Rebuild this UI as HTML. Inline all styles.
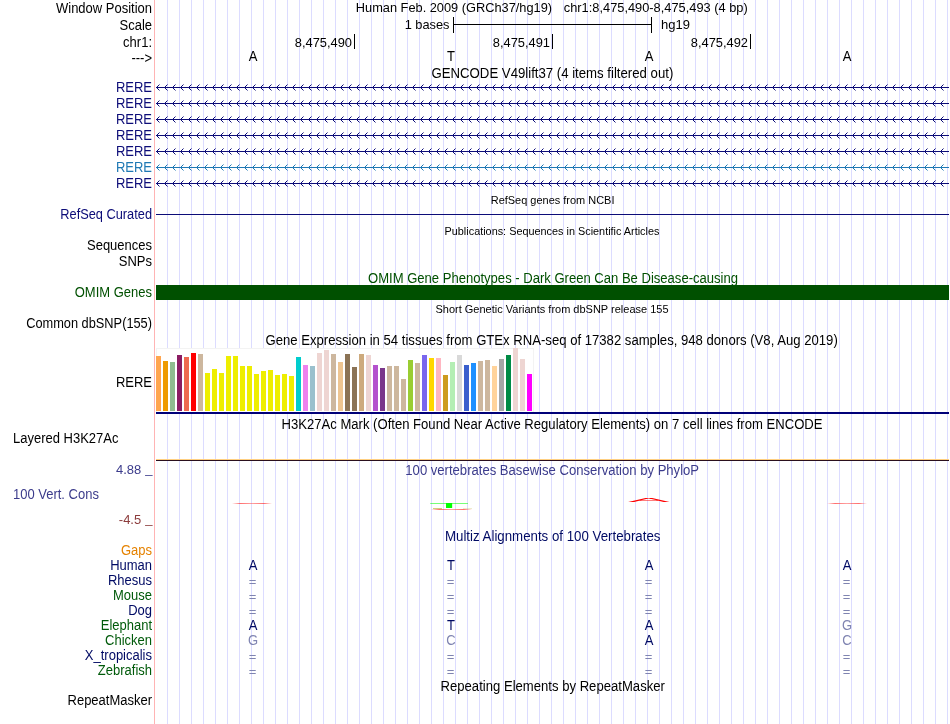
<!DOCTYPE html>
<html><head><meta charset="utf-8"><title>UCSC Genome Browser</title>
<style>
html,body{margin:0;padding:0;background:#fff;}
body{width:950px;height:724px;overflow:hidden;}
svg{display:block;will-change:transform;font-family:"Liberation Sans", sans-serif;font-size:13px;}
.r{text-anchor:end} .c{text-anchor:middle}
.s{font-size:10.8px}
</style></head><body>
<svg width="950" height="724" viewBox="0 0 950 724">
<defs>
<pattern id="chevN" x="156" y="0" width="8" height="7" patternUnits="userSpaceOnUse">
<path d="M3.5,0.5 L0.5,3.5 L3.5,6.5" fill="none" stroke="#0c0c78" stroke-width="1"/>
</pattern>
<pattern id="chevT" x="156" y="0" width="8" height="7" patternUnits="userSpaceOnUse">
<path d="M3.5,0.5 L0.5,3.5 L3.5,6.5" fill="none" stroke="#1e78b4" stroke-width="1"/>
</pattern>
<linearGradient id="fr" x1="0" x2="1" y1="0" y2="0">
<stop offset="0" stop-color="#ff3030" stop-opacity="0"/><stop offset="0.2" stop-color="#ff3030" stop-opacity="0.7"/>
<stop offset="0.5" stop-color="#ff3030" stop-opacity="0.45"/>
<stop offset="0.8" stop-color="#ff3030" stop-opacity="0.7"/><stop offset="1" stop-color="#ff3030" stop-opacity="0"/>
</linearGradient>
</defs>


<g fill="#dcdcff" shape-rendering="crispEdges">
<rect x="167" y="0" width="1" height="724"/>
<rect x="179" y="0" width="1" height="724"/>
<rect x="191" y="0" width="1" height="724"/>
<rect x="203" y="0" width="1" height="724"/>
<rect x="215" y="0" width="1" height="724"/>
<rect x="227" y="0" width="1" height="724"/>
<rect x="239" y="0" width="1" height="724"/>
<rect x="251" y="0" width="1" height="724"/>
<rect x="263" y="0" width="1" height="724"/>
<rect x="275" y="0" width="1" height="724"/>
<rect x="287" y="0" width="1" height="724"/>
<rect x="299" y="0" width="1" height="724"/>
<rect x="311" y="0" width="1" height="724"/>
<rect x="323" y="0" width="1" height="724"/>
<rect x="335" y="0" width="1" height="724"/>
<rect x="347" y="0" width="1" height="724"/>
<rect x="359" y="0" width="1" height="724"/>
<rect x="371" y="0" width="1" height="724"/>
<rect x="383" y="0" width="1" height="724"/>
<rect x="395" y="0" width="1" height="724"/>
<rect x="407" y="0" width="1" height="724"/>
<rect x="419" y="0" width="1" height="724"/>
<rect x="431" y="0" width="1" height="724"/>
<rect x="443" y="0" width="1" height="724"/>
<rect x="455" y="0" width="1" height="724"/>
<rect x="467" y="0" width="1" height="724"/>
<rect x="479" y="0" width="1" height="724"/>
<rect x="491" y="0" width="1" height="724"/>
<rect x="503" y="0" width="1" height="724"/>
<rect x="515" y="0" width="1" height="724"/>
<rect x="527" y="0" width="1" height="724"/>
<rect x="539" y="0" width="1" height="724"/>
<rect x="551" y="0" width="1" height="724"/>
<rect x="563" y="0" width="1" height="724"/>
<rect x="575" y="0" width="1" height="724"/>
<rect x="587" y="0" width="1" height="724"/>
<rect x="599" y="0" width="1" height="724"/>
<rect x="611" y="0" width="1" height="724"/>
<rect x="623" y="0" width="1" height="724"/>
<rect x="635" y="0" width="1" height="724"/>
<rect x="647" y="0" width="1" height="724"/>
<rect x="659" y="0" width="1" height="724"/>
<rect x="671" y="0" width="1" height="724"/>
<rect x="683" y="0" width="1" height="724"/>
<rect x="695" y="0" width="1" height="724"/>
<rect x="707" y="0" width="1" height="724"/>
<rect x="719" y="0" width="1" height="724"/>
<rect x="731" y="0" width="1" height="724"/>
<rect x="743" y="0" width="1" height="724"/>
<rect x="755" y="0" width="1" height="724"/>
<rect x="767" y="0" width="1" height="724"/>
<rect x="779" y="0" width="1" height="724"/>
<rect x="791" y="0" width="1" height="724"/>
<rect x="803" y="0" width="1" height="724"/>
<rect x="815" y="0" width="1" height="724"/>
<rect x="827" y="0" width="1" height="724"/>
<rect x="839" y="0" width="1" height="724"/>
<rect x="851" y="0" width="1" height="724"/>
<rect x="863" y="0" width="1" height="724"/>
<rect x="875" y="0" width="1" height="724"/>
<rect x="887" y="0" width="1" height="724"/>
<rect x="899" y="0" width="1" height="724"/>
<rect x="911" y="0" width="1" height="724"/>
<rect x="923" y="0" width="1" height="724"/>
<rect x="935" y="0" width="1" height="724"/>
<rect x="947" y="0" width="1" height="724"/>
</g>
<rect x="154" y="0" width="1" height="724" fill="#ffb4b4" shape-rendering="crispEdges"/>
<text transform="translate(152,12.5) scale(1.0,1.08)" class="r" fill="#000">Window Position</text>
<text transform="translate(152,29.5) scale(1.0,1.08)" class="r" fill="#000">Scale</text>
<text transform="translate(152,46.5) scale(1.0,1.08)" class="r" fill="#000">chr1:</text>
<text transform="translate(152,63) scale(1.0,1.08)" class="r" fill="#000">---&gt;</text>
<text transform="translate(355.8,12.2) scale(0.985,1.0)" class="" fill="#000">Human Feb. 2009 (GRCh37/hg19)</text>
<text transform="translate(563.8,12.2) scale(0.987,1.0)" class="" fill="#000">chr1:8,475,490-8,475,493 (4 bp)</text>
<text transform="translate(449.5,29) scale(0.985,1.0)" class="r" fill="#000">1 bases</text>
<g fill="#000" shape-rendering="crispEdges"><rect x="453" y="24" width="199" height="1"/><rect x="453" y="17" width="1" height="16"/><rect x="651" y="17" width="1" height="16"/></g>
<text transform="translate(661,29) scale(1.0,1.0)" class="" fill="#000">hg19</text>
<text transform="translate(352,47) scale(0.99,1.0)" class="r" fill="#000">8,475,490</text>
<rect x="354" y="34" width="1" height="15" fill="#000" shape-rendering="crispEdges"/>
<text transform="translate(550,47) scale(0.99,1.0)" class="r" fill="#000">8,475,491</text>
<rect x="552" y="34" width="1" height="15" fill="#000" shape-rendering="crispEdges"/>
<text transform="translate(748,47) scale(0.99,1.0)" class="r" fill="#000">8,475,492</text>
<rect x="750" y="34" width="1" height="15" fill="#000" shape-rendering="crispEdges"/>
<text transform="translate(253,61) scale(1.0,1.1)" class="c" fill="#000">A</text>
<text transform="translate(451,61) scale(1.0,1.1)" class="c" fill="#000">T</text>
<text transform="translate(649,61) scale(1.0,1.1)" class="c" fill="#000">A</text>
<text transform="translate(847,61) scale(1.0,1.1)" class="c" fill="#000">A</text>
<text transform="translate(552.4,77.5) scale(1.015,1.08)" class="c" fill="#000">GENCODE V49lift37 (4 items filtered out)</text>
<text transform="translate(152,91.5) scale(1.0,1.1)" class="r" fill="#0c0c78">RERE</text>
<g color="#0c0c78" shape-rendering="crispEdges"><rect x="156" y="87" width="793" height="1" fill="#0c0c78"/></g>
<g color="#0c0c78" transform="translate(0,84)"><rect x="156" y="0" width="791" height="7" fill="url(#chevN)"/></g>
<text transform="translate(152,107.5) scale(1.0,1.1)" class="r" fill="#0c0c78">RERE</text>
<g color="#0c0c78" shape-rendering="crispEdges"><rect x="156" y="103" width="793" height="1" fill="#0c0c78"/></g>
<g color="#0c0c78" transform="translate(0,100)"><rect x="156" y="0" width="791" height="7" fill="url(#chevN)"/></g>
<text transform="translate(152,123.5) scale(1.0,1.1)" class="r" fill="#0c0c78">RERE</text>
<g color="#0c0c78" shape-rendering="crispEdges"><rect x="156" y="119" width="793" height="1" fill="#0c0c78"/></g>
<g color="#0c0c78" transform="translate(0,116)"><rect x="156" y="0" width="791" height="7" fill="url(#chevN)"/></g>
<text transform="translate(152,139.5) scale(1.0,1.1)" class="r" fill="#0c0c78">RERE</text>
<g color="#0c0c78" shape-rendering="crispEdges"><rect x="156" y="135" width="793" height="1" fill="#0c0c78"/></g>
<g color="#0c0c78" transform="translate(0,132)"><rect x="156" y="0" width="791" height="7" fill="url(#chevN)"/></g>
<text transform="translate(152,155.5) scale(1.0,1.1)" class="r" fill="#0c0c78">RERE</text>
<g color="#0c0c78" shape-rendering="crispEdges"><rect x="156" y="151" width="793" height="1" fill="#0c0c78"/></g>
<g color="#0c0c78" transform="translate(0,148)"><rect x="156" y="0" width="791" height="7" fill="url(#chevN)"/></g>
<text transform="translate(152,171.5) scale(1.0,1.1)" class="r" fill="#1e78b4">RERE</text>
<g color="#1e78b4" shape-rendering="crispEdges"><rect x="156" y="167" width="793" height="1" fill="#1e78b4"/></g>
<g color="#1e78b4" transform="translate(0,164)"><rect x="156" y="0" width="791" height="7" fill="url(#chevT)"/></g>
<text transform="translate(152,187.5) scale(1.0,1.1)" class="r" fill="#0c0c78">RERE</text>
<g color="#0c0c78" shape-rendering="crispEdges"><rect x="156" y="183" width="793" height="1" fill="#0c0c78"/></g>
<g color="#0c0c78" transform="translate(0,180)"><rect x="156" y="0" width="791" height="7" fill="url(#chevN)"/></g>
<text transform="translate(552.6,204) scale(1.017,1.08)" class="c s" fill="#000">RefSeq genes from NCBI</text>
<text transform="translate(152,218.5) scale(0.985,1.08)" class="r" fill="#0c0c78">RefSeq Curated</text>
<rect x="156" y="214" width="793" height="1" fill="#0c0c78" shape-rendering="crispEdges"/>
<text transform="translate(552,235) scale(1.006,1.08)" class="c s" fill="#000">Publications: Sequences in Scientific Articles</text>
<text transform="translate(152,249.5) scale(1.0,1.08)" class="r" fill="#000">Sequences</text>
<text transform="translate(152,265.5) scale(1.0,1.1)" class="r" fill="#000">SNPs</text>
<text transform="translate(553,282.5) scale(1.005,1.08)" class="c" fill="#005000">OMIM Gene Phenotypes - Dark Green Can Be Disease-causing</text>
<text transform="translate(152,296.5) scale(1.0,1.1)" class="r" fill="#005000">OMIM Genes</text>
<rect x="156" y="285" width="793" height="15" fill="#005000" shape-rendering="crispEdges"/>
<text transform="translate(552,313) scale(1.019,1.08)" class="c s" fill="#000">Short Genetic Variants from dbSNP release 155</text>
<text transform="translate(152,327.5) scale(0.985,1.08)" class="r" fill="#000">Common dbSNP(155)</text>
<text transform="translate(551.6,344.5) scale(1.01,1.08)" class="c" fill="#000">Gene Expression in 54 tissues from GTEx RNA-seq of 17382 samples, 948 donors (V8, Aug 2019)</text>
<rect x="156" y="348" width="378" height="64" fill="#f3f3f3" shape-rendering="crispEdges"/><rect x="157" y="349" width="376" height="63" fill="#fff" shape-rendering="crispEdges"/>
<g shape-rendering="crispEdges">
<rect x="156" y="356" width="5" height="55" fill="#FFA54F"/>
<rect x="163" y="361" width="5" height="50" fill="#EE9A00"/>
<rect x="170" y="362" width="5" height="49" fill="#8FBC8F"/>
<rect x="177" y="355" width="5" height="56" fill="#8B1C62"/>
<rect x="184" y="357" width="5" height="54" fill="#EE6A50"/>
<rect x="191" y="353" width="5" height="58" fill="#FF0000"/>
<rect x="198" y="354" width="5" height="57" fill="#CDB79E"/>
<rect x="205" y="373" width="5" height="38" fill="#EEEE00"/>
<rect x="212" y="369" width="5" height="42" fill="#EEEE00"/>
<rect x="219" y="373" width="5" height="38" fill="#EEEE00"/>
<rect x="226" y="356" width="5" height="55" fill="#EEEE00"/>
<rect x="233" y="356" width="5" height="55" fill="#EEEE00"/>
<rect x="240" y="366" width="5" height="45" fill="#EEEE00"/>
<rect x="247" y="366" width="5" height="45" fill="#EEEE00"/>
<rect x="254" y="374" width="5" height="37" fill="#EEEE00"/>
<rect x="261" y="371" width="5" height="40" fill="#EEEE00"/>
<rect x="268" y="370" width="5" height="41" fill="#EEEE00"/>
<rect x="275" y="375" width="5" height="36" fill="#EEEE00"/>
<rect x="282" y="374" width="5" height="37" fill="#EEEE00"/>
<rect x="289" y="376" width="5" height="35" fill="#EEEE00"/>
<rect x="296" y="357" width="5" height="54" fill="#00CDCD"/>
<rect x="303" y="365" width="5" height="46" fill="#EE82EE"/>
<rect x="310" y="366" width="5" height="45" fill="#9AC0CD"/>
<rect x="317" y="353" width="5" height="58" fill="#EED5D2"/>
<rect x="324" y="350" width="5" height="61" fill="#EED5D2"/>
<rect x="331" y="354" width="5" height="57" fill="#CDB79E"/>
<rect x="338" y="362" width="5" height="49" fill="#EEC591"/>
<rect x="345" y="354" width="5" height="57" fill="#8B7355"/>
<rect x="352" y="367" width="5" height="44" fill="#8B7355"/>
<rect x="359" y="354" width="5" height="57" fill="#CDAA7D"/>
<rect x="366" y="355" width="5" height="56" fill="#EED5D2"/>
<rect x="373" y="365" width="5" height="46" fill="#B452CD"/>
<rect x="380" y="368" width="5" height="43" fill="#7A378B"/>
<rect x="387" y="366" width="5" height="45" fill="#CDB79E"/>
<rect x="394" y="366" width="5" height="45" fill="#CDB79E"/>
<rect x="401" y="379" width="5" height="32" fill="#CDB79E"/>
<rect x="408" y="360" width="5" height="51" fill="#9ACD32"/>
<rect x="415" y="363" width="5" height="48" fill="#CDB79E"/>
<rect x="422" y="355" width="5" height="56" fill="#7A67EE"/>
<rect x="429" y="358" width="5" height="53" fill="#FFD700"/>
<rect x="436" y="358" width="5" height="53" fill="#FFB6C1"/>
<rect x="443" y="375" width="5" height="36" fill="#CD9B1D"/>
<rect x="450" y="362" width="5" height="49" fill="#B4EEB4"/>
<rect x="457" y="355" width="5" height="56" fill="#D9D9D9"/>
<rect x="464" y="365" width="5" height="46" fill="#3A5FCD"/>
<rect x="471" y="363" width="5" height="48" fill="#1E90FF"/>
<rect x="478" y="361" width="5" height="50" fill="#CDB79E"/>
<rect x="485" y="360" width="5" height="51" fill="#CDB79E"/>
<rect x="492" y="366" width="5" height="45" fill="#FFD39B"/>
<rect x="499" y="359" width="5" height="52" fill="#A6A6A6"/>
<rect x="506" y="355" width="5" height="56" fill="#008B45"/>
<rect x="513" y="348" width="5" height="63" fill="#EED5D2"/>
<rect x="520" y="359" width="5" height="52" fill="#EED5D2"/>
<rect x="527" y="374" width="5" height="37" fill="#FF00FF"/>
<rect x="156" y="412" width="793" height="2" fill="#000078"/>
</g>
<text transform="translate(152,386.5) scale(1.0,1.1)" class="r" fill="#000">RERE</text>
<text transform="translate(552,428.5) scale(1.0075,1.08)" class="c" fill="#000">H3K27Ac Mark (Often Found Near Active Regulatory Elements) on 7 cell lines from ENCODE</text>
<text transform="translate(13,442.5) scale(1.0,1.08)" class="" fill="#000">Layered H3K27Ac</text>
<g shape-rendering="crispEdges"><rect x="156" y="459" width="793" height="1" fill="#ffcf80"/><rect x="156" y="460" width="793" height="1" fill="#2a0f1e"/></g>
<text transform="translate(141.2,473.5) scale(1.0,0.98)" class="r" fill="#3c3c8c">4.88</text>
<text transform="translate(152.5,473.1) scale(1.0,1.0)" class="r" fill="#3c3c8c">_</text>
<text transform="translate(552.2,474.5) scale(1.007,1.08)" class="c" fill="#3c3c8c">100 vertebrates Basewise Conservation by PhyloP</text>
<text transform="translate(13,498.5) scale(1.0,1.08)" class="" fill="#3c3c8c">100 Vert. Cons</text>
<text transform="translate(141.2,523.5) scale(1.0,0.98)" class="r" fill="#8c3c3c">-4.5</text>
<text transform="translate(152.5,523.1) scale(1.0,1.0)" class="r" fill="#8c3c3c">_</text>
<rect x="232" y="503" width="40" height="1" fill="url(#fr)"/>
<rect x="827" y="503" width="40" height="1" fill="url(#fr)"/>
<rect x="431" y="509" width="41" height="1" fill="url(#fr)"/>
<rect x="433" y="508" width="9" height="1" fill="#a0a000" opacity="0.5"/><rect x="463" y="508" width="9" height="1" fill="#a0a000" opacity="0.2"/>
<text fill="#00ff00" style="font-size:10px" transform="translate(428.7,508) scale(6.67,0.7)">T</text>
<text x="0" y="0" fill="#ff0000" style="font-size:10px" transform="translate(628,502) scale(6.25,0.6)">A</text>
<text transform="translate(552.7,540.5) scale(1.022,1.08)" class="c" fill="#000a64">Multiz Alignments of 100 Vertebrates</text>
<text transform="translate(152,554.5) scale(1.0,1.08)" class="r" fill="#e58200">Gaps</text>
<text transform="translate(152,569.5) scale(1.0,1.08)" class="r" fill="#000a64">Human</text>
<text transform="translate(253,569.5) scale(1.0,1.1)" class="c" fill="#000a64">A</text>
<text transform="translate(451,569.5) scale(1.0,1.1)" class="c" fill="#000a64">T</text>
<text transform="translate(649,569.5) scale(1.0,1.1)" class="c" fill="#000a64">A</text>
<text transform="translate(847,569.5) scale(1.0,1.1)" class="c" fill="#000a64">A</text>
<text transform="translate(152,584.5) scale(1.0,1.08)" class="r" fill="#000a64">Rhesus</text>
<text transform="translate(252.5,586.4) scale(1.0,1.0)" class="c" fill="#7f84b1">=</text>
<text transform="translate(450.5,586.4) scale(1.0,1.0)" class="c" fill="#7f84b1">=</text>
<text transform="translate(648.5,586.4) scale(1.0,1.0)" class="c" fill="#7f84b1">=</text>
<text transform="translate(846.5,586.4) scale(1.0,1.0)" class="c" fill="#7f84b1">=</text>
<text transform="translate(152,599.5) scale(1.0,1.08)" class="r" fill="#005a0a">Mouse</text>
<text transform="translate(252.5,601.4) scale(1.0,1.0)" class="c" fill="#7f84b1">=</text>
<text transform="translate(450.5,601.4) scale(1.0,1.0)" class="c" fill="#7f84b1">=</text>
<text transform="translate(648.5,601.4) scale(1.0,1.0)" class="c" fill="#7f84b1">=</text>
<text transform="translate(846.5,601.4) scale(1.0,1.0)" class="c" fill="#7f84b1">=</text>
<text transform="translate(152,614.5) scale(1.0,1.08)" class="r" fill="#000a64">Dog</text>
<text transform="translate(252.5,616.4) scale(1.0,1.0)" class="c" fill="#7f84b1">=</text>
<text transform="translate(450.5,616.4) scale(1.0,1.0)" class="c" fill="#7f84b1">=</text>
<text transform="translate(648.5,616.4) scale(1.0,1.0)" class="c" fill="#7f84b1">=</text>
<text transform="translate(846.5,616.4) scale(1.0,1.0)" class="c" fill="#7f84b1">=</text>
<text transform="translate(152,629.5) scale(1.0,1.08)" class="r" fill="#005a0a">Elephant</text>
<text transform="translate(253,629.5) scale(1.0,1.1)" class="c" fill="#000a64">A</text>
<text transform="translate(451,629.5) scale(1.0,1.1)" class="c" fill="#000a64">T</text>
<text transform="translate(649,629.5) scale(1.0,1.1)" class="c" fill="#000a64">A</text>
<text transform="translate(847,629.5) scale(1.0,1.1)" class="c" fill="#7f84b1">G</text>
<text transform="translate(152,644.5) scale(1.0,1.08)" class="r" fill="#005a0a">Chicken</text>
<text transform="translate(253,644.5) scale(1.0,1.1)" class="c" fill="#7f84b1">G</text>
<text transform="translate(451,644.5) scale(1.0,1.1)" class="c" fill="#7f84b1">C</text>
<text transform="translate(649,644.5) scale(1.0,1.1)" class="c" fill="#000a64">A</text>
<text transform="translate(847,644.5) scale(1.0,1.1)" class="c" fill="#7f84b1">C</text>
<text transform="translate(152,659.5) scale(1.0,1.08)" class="r" fill="#000a64">X_tropicalis</text>
<text transform="translate(252.5,661.4) scale(1.0,1.0)" class="c" fill="#7f84b1">=</text>
<text transform="translate(450.5,661.4) scale(1.0,1.0)" class="c" fill="#7f84b1">=</text>
<text transform="translate(648.5,661.4) scale(1.0,1.0)" class="c" fill="#7f84b1">=</text>
<text transform="translate(846.5,661.4) scale(1.0,1.0)" class="c" fill="#7f84b1">=</text>
<text transform="translate(152,674.5) scale(1.0,1.08)" class="r" fill="#005a0a">Zebrafish</text>
<text transform="translate(252.5,676.4) scale(1.0,1.0)" class="c" fill="#7f84b1">=</text>
<text transform="translate(450.5,676.4) scale(1.0,1.0)" class="c" fill="#7f84b1">=</text>
<text transform="translate(648.5,676.4) scale(1.0,1.0)" class="c" fill="#7f84b1">=</text>
<text transform="translate(846.5,676.4) scale(1.0,1.0)" class="c" fill="#7f84b1">=</text>
<text transform="translate(552.7,690.5) scale(1.0086,1.08)" class="c" fill="#000">Repeating Elements by RepeatMasker</text>
<text transform="translate(152,704.5) scale(1.0,1.08)" class="r" fill="#000">RepeatMasker</text>
</svg></body></html>
